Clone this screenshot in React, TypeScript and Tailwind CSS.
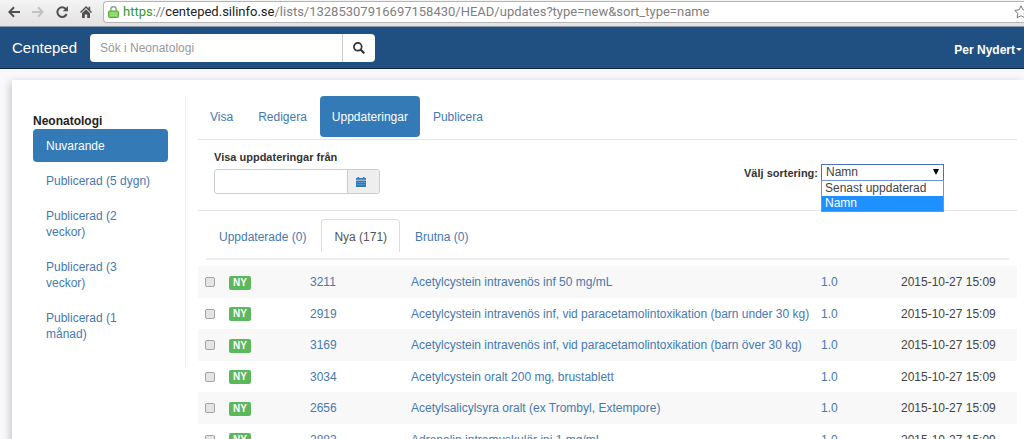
import React, { useState } from 'react';
import clsx from 'clsx';

interface Article {
  id: string;
  name: string;
  version: string;
  updated: string;
}

const versions = [
  'Nuvarande',
  'Publicerad (5 dygn)',
  'Publicerad (2 veckor)',
  'Publicerad (3 veckor)',
  'Publicerad (1 månad)',
];

const sections = ['Visa', 'Redigera', 'Uppdateringar', 'Publicera'];

const filters = ['Uppdaterade (0)', 'Nya (171)', 'Brutna (0)'];

const sortOptions = ['Senast uppdaterad', 'Namn'];

const articles: Article[] = [
  { id: '3211', name: 'Acetylcystein intravenös inf 50 mg/mL', version: '1.0', updated: '2015-10-27 15:09' },
  { id: '2919', name: 'Acetylcystein intravenös inf, vid paracetamolintoxikation (barn under 30 kg)', version: '1.0', updated: '2015-10-27 15:09' },
  { id: '3169', name: 'Acetylcystein intravenös inf, vid paracetamolintoxikation (barn över 30 kg)', version: '1.0', updated: '2015-10-27 15:09' },
  { id: '3034', name: 'Acetylcystein oralt 200 mg, brustablett', version: '1.0', updated: '2015-10-27 15:09' },
  { id: '2656', name: 'Acetylsalicylsyra oralt (ex Trombyl, Extempore)', version: '1.0', updated: '2015-10-27 15:09' },
  { id: '2883', name: 'Adrenalin intramuskulär inj 1 mg/mL', version: '1.0', updated: '2015-10-27 15:09' },
];

const BrowserBar: React.FC = () => (
  <div className="flex h-[27px] shrink-0 items-start border-b border-[#8d99a8] bg-gradient-to-b from-[#f4f4f4] to-[#e2e2e2]">
    <div className="flex h-6 flex-1 items-center">
      <div className="flex w-[103px] shrink-0 items-center gap-3 pl-2 text-[#505050]">
        <button aria-label="Bakåt">
          <svg className="h-3 w-3" viewBox="0 0 12 12" fill="none" stroke="currentColor" strokeWidth="2">
            <path d="M12 6H1.5M6 1.2 1.3 6 6 10.8" />
          </svg>
        </button>
        <button aria-label="Framåt" className="text-[#c2c2c2]">
          <svg className="h-3 w-3" viewBox="0 0 12 12" fill="none" stroke="currentColor" strokeWidth="2">
            <path d="M0 6h10.5M6 1.2 10.7 6 6 10.8" />
          </svg>
        </button>
        <button aria-label="Ladda om">
          <svg className="h-3 w-3" viewBox="0 0 12 12" fill="none" stroke="currentColor" strokeWidth="2">
            <path d="M10 3.2A4.8 4.8 0 1 0 10.6 8" />
            <path d="M12 0v5.2H6.8z" fill="currentColor" stroke="none" />
          </svg>
        </button>
        <button aria-label="Startsida">
          <svg className="h-3 w-3" viewBox="0 0 12 12" fill="currentColor">
            <path d="M6 0 0 6l1 1 5-5 5 5 1-1-1.8-1.8V.8H8.6v1.8z" />
            <path d="M6 3.2 2 7.2V12h2.8V8.4h2.4V12H10V7.2z" />
          </svg>
        </button>
      </div>
      <div className="flex h-[22px] min-w-0 flex-1 items-center overflow-hidden rounded-l-sm border border-r-0 border-[#b4b4b4] bg-white pl-1">
        <svg className="mr-1 h-3 w-[11px] shrink-0" viewBox="0 0 11 12">
          <path d="M2.8 6V3.4a2.7 2.7 0 0 1 5.4 0V6" fill="none" stroke="#8fae86" strokeWidth="1.5" />
          <rect x="0.5" y="5" width="10" height="6.5" rx="1" fill="#7ed15a" stroke="#5aa63d" />
          <path d="M2 7.2h7M2 9.3h7" stroke="#a6e38b" />
        </svg>
        <span className="flex-1 whitespace-nowrap font-[Roboto,'Noto_Sans',sans-serif] text-[13px] leading-5 text-[#808080]">
          <span className="text-[#2f9a2f]">https</span>://<span className="text-[#222]">centeped.silinfo.se</span>
          /lists/13285307916697158430/HEAD/updates?type=new&amp;sort_type=name
        </span>
        <svg className="-mr-1 h-[14px] w-[14px] shrink-0" viewBox="0 0 14 14" fill="none" stroke="#777" strokeLinejoin="round">
          <path d="m7 .8 1.9 4 4.3.6-3.1 3 .8 4.4L7 10.7l-3.9 2.1.8-4.4-3.1-3 4.3-.6z" />
        </svg>
      </div>
    </div>
  </div>
);

const Navbar: React.FC = () => (
  <header className="flex h-[42px] shrink-0 items-center border-b border-[#10294a] bg-[#204f81] pl-3 pr-[2px]">
    <a href="#" className="w-[78px] text-[15px] text-white">
      Centeped
    </a>
    <form className="flex h-7 w-[285px]" onSubmit={(e) => e.preventDefault()}>
      <input
        type="text"
        aria-label="Sök i Neonatologi"
        placeholder="Sök i Neonatologi"
        className="min-w-0 flex-1 rounded-l border-r border-[#ccc] bg-white px-[10px] text-xs text-[#555] outline-none placeholder:text-[#999]"
      />
      <button aria-label="Sök" className="flex w-8 items-center justify-center rounded-r bg-white">
        <svg className="h-3 w-3" viewBox="0 0 12 12" fill="none" stroke="#333">
          <circle cx="4.8" cy="4.8" r="3.9" strokeWidth="1.7" />
          <path d="m7.7 7.7 3.6 3.6" strokeWidth="2.2" />
        </svg>
      </button>
    </form>
    <button className="ml-auto flex items-center gap-px pt-1 text-xs font-bold text-white">
      Per Nydert
      <svg className="h-[3px] w-[6px]" viewBox="0 0 6 3" fill="currentColor">
        <path d="M0 0h6L3 3z" />
      </svg>
    </button>
  </header>
);

const Sidebar: React.FC = () => (
  <aside className="h-[272px] w-[174px] shrink-0 border-r border-[#eee] pl-[21px] pr-[17px] pt-[17px]">
    <h2 className="text-xs font-bold text-[#222]">Neonatologi</h2>
    <nav className="flex flex-col gap-[2px]">
      {versions.map((label, i) => (
        <a
          key={label}
          href="#"
          className={clsx(
            'rounded px-[13px] pb-2 pt-[9px] text-xs',
            i === 0 ? 'bg-[#337ab7] text-white' : 'text-[#4679b0]'
          )}
        >
          {label}
        </a>
      ))}
    </nav>
  </aside>
);

const SortSelect: React.FC = () => {
  const [sort, setSort] = useState('Namn');

  return (
    <div className="flex items-center gap-[3px]">
      <label htmlFor="sort" className="text-[11px] font-bold text-[#333]">
        Välj sortering:
      </label>
      <div className="relative w-[123px]">
        <select
          id="sort"
          value={sort}
          onChange={(e) => setSort(e.target.value)}
          className="block h-[17px] w-full appearance-none border border-[#4a6fc0] bg-white pl-1 text-xs leading-[15px] text-[#444] outline-none"
        >
          {sortOptions.map((option) => (
            <option key={option}>{option}</option>
          ))}
        </select>
        <svg className="pointer-events-none absolute right-[5px] top-[5px] h-[6px] w-[6px]" viewBox="0 0 6 6">
          <path d="M0 0h6L3 6z" fill="#000" />
        </svg>
        <ul className="absolute inset-x-0 top-4 z-10 border border-[#6f93d8] bg-white text-xs text-[#444]">
          {sortOptions.map((option) => (
            <li
              key={option}
              onClick={() => setSort(option)}
              className={clsx('h-[15px] pl-[3px] leading-[15px]', option === sort && 'bg-[#1e90ff] text-white')}
            >
              {option}
            </li>
          ))}
        </ul>
      </div>
    </div>
  );
};

const ArticleTable: React.FC = () => (
  <table className="mt-[6px] w-full table-fixed text-left text-xs">
    <colgroup>
      <col className="w-6" />
      <col className="w-[81px]" />
      <col className="w-[101px]" />
      <col />
      <col className="w-20" />
      <col className="w-[123px]" />
    </colgroup>
    <tbody>
      {articles.map(({ id, name, version, updated }) => (
        <tr key={id} className="odd:h-8 odd:bg-[#f8f8f8] even:h-[31px]">
          <td className="pl-[7px]">
            <input
              type="checkbox"
              aria-label={name}
              className="block h-[10px] w-[10px] appearance-none rounded-[2px] border border-[#a3a3a3] bg-[#e4e4e4] checked:bg-[#337ab7]"
            />
          </td>
          <td className="pl-[7px]">
            <span className="mt-px block h-[14px] w-[22px] rounded-[2px] bg-[#5cb85c] text-center text-[10px] font-bold leading-[14px] text-white">
              NY
            </span>
          </td>
          <td className="pl-[7px]">
            <a href="#" className="text-[#4679b0]">{id}</a>
          </td>
          <td className="whitespace-nowrap pl-[7px]">
            <a href="#" className="text-[#4679b0]">{name}</a>
          </td>
          <td className="pl-[7px]">
            <a href="#" className="text-[#4679b0]">{version}</a>
          </td>
          <td className="whitespace-nowrap pl-[7px] text-[#444]">{updated}</td>
        </tr>
      ))}
    </tbody>
  </table>
);

const App: React.FC = () => {
  return (
    <div className="flex h-screen flex-col overflow-hidden bg-[#f9f8fa] font-['Liberation_Sans',Arial,sans-serif] leading-4">
      <BrowserBar />
      <Navbar />
      <div className="min-h-0 flex-1 pl-3 pt-[11px]">
        <div className="flex items-start bg-white pb-8 pr-[7px] pt-4 shadow-[-2px_2px_8px_rgba(0,0,0,0.2)]">
          <Sidebar />
          <main className="ml-3 min-w-0 flex-1">
            <nav className="flex gap-px border-b border-[#e5e5e5] pb-[2px]">
              {sections.map((label) => (
                <a
                  key={label}
                  href="#"
                  className={clsx(
                    'rounded px-3 pb-3 pt-[13px] text-xs',
                    label === 'Uppdateringar' ? 'bg-[#337ab7] text-white' : 'text-[#4679b0]'
                  )}
                >
                  {label}
                </a>
              ))}
            </nav>

            <div className="flex items-start justify-between border-b border-[#e5e5e5] pb-4 pl-4 pr-[73px] pt-[9px]">
              <div>
                <label htmlFor="from" className="mb-1 block text-[11px] font-bold text-[#333]">
                  Visa uppdateringar från
                </label>
                <div className="flex h-[25px] w-[166px] overflow-hidden rounded-[3px] border border-[#ccc]">
                  <input id="from" type="text" className="min-w-0 flex-1 px-2 text-xs outline-none" />
                  <button aria-label="Välj datum" className="w-8 border-l border-[#ccc] bg-[#eee] pl-2">
                    <svg className="h-[10px] w-[10px]" viewBox="0 0 10 10" fill="#337ab7">
                      <path d="M0 1h1.5V0h1.6v1h3.8V0h1.6v1H10v1.8H0z" />
                      <path d="M0 3.4h10V10H0z" />
                      <path d="M1 5.4h8M1 7.6h8" stroke="#6ea3d0" strokeWidth=".6" />
                    </svg>
                  </button>
                </div>
              </div>
              <div className="pt-[15px]">
                <SortSelect />
              </div>
            </div>

            <nav className="ml-2 mr-2 flex gap-[2px] border-b-2 border-[#eee] pb-[6px] pt-2">
              {filters.map((label, i) => (
                <a
                  key={label}
                  href="#"
                  className={clsx(
                    'rounded-t border border-b-0 px-3 pb-[7px] pt-[9px] text-xs',
                    i === 1 ? 'border-[#ddd] text-[#555]' : 'border-transparent text-[#4679b0]'
                  )}
                >
                  {label}
                </a>
              ))}
            </nav>

            <ArticleTable />
          </main>
        </div>
      </div>
    </div>
  );
};

export default App;
